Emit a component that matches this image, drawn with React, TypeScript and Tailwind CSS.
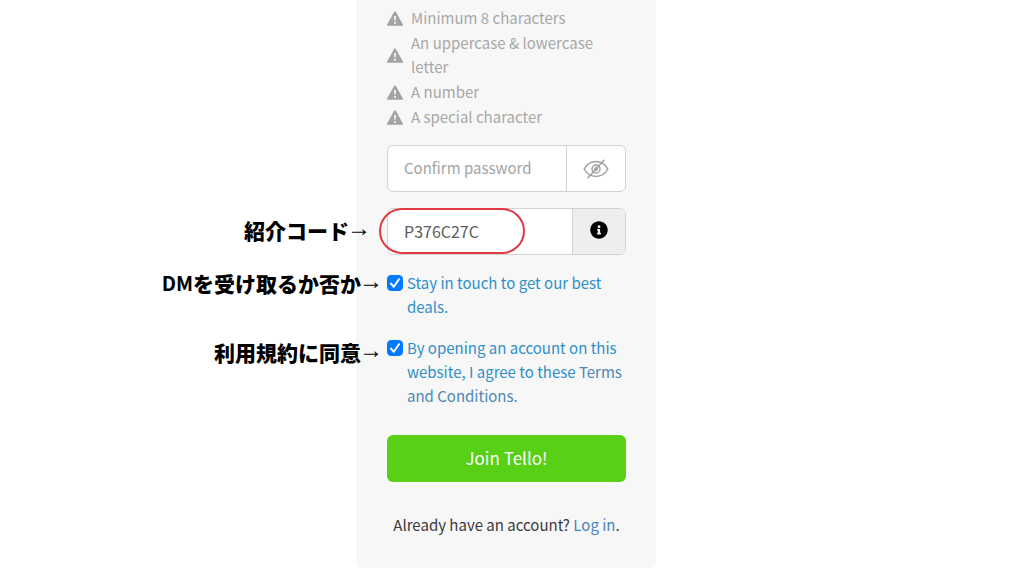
import type { ReactNode } from 'react';
import { FaInfoCircle } from 'react-icons/fa';

const rules = [
  'Minimum 8 characters',
  'An uppercase & lowercase letter',
  'A number',
  'A special character',
];

function WarningIcon() {
  return (
    <svg viewBox="0 0 32 30" className="h-[15px] w-4 shrink-0" aria-hidden="true">
      <path
        d="M14.4 1.400a1.800 1.800 0 0 1 3.200 0l14.200 25.800a1.500 1.500 0 0 1-1.300 2.200H1.500a1.500 1.500 0 0 1-1.300-2.200z"
        fill="#a3a3a3"
      />
      <path d="M14 10h4l-.8 9.600h-2.400zM14.200 22h3.600v3.600h-3.600z" fill="#f7f7f7" />
    </svg>
  );
}

function EyeOffIcon() {
  return (
    <svg
      viewBox="0 0 26 20"
      className="h-5 w-[26px]"
      fill="none"
      stroke="#a0a0a0"
      strokeWidth="1.500"
      strokeLinecap="round"
      aria-hidden="true"
    >
      <path d="M1.200 10C4 5 8.200 2.600 13 2.600S22 5 24.800 10C22 15 17.800 17.400 13 17.400S4 15 1.200 10z" />
      <circle cx="13" cy="10" r="4" />
      <circle cx="13" cy="10" r="1.300" />
      <path d="M5 18.800 21 1.200" />
    </svg>
  );
}

// Callout that hangs off the left side of the row it describes
function Note({ children, className }: { children: ReactNode; className: string }) {
  return (
    <span
      className={`absolute flex items-center whitespace-nowrap text-[21px] leading-6 font-black text-black ${className}`}
    >
      {children}
      <span className="-ml-0.5 pb-1 font-['Liberation_Sans',sans-serif] text-2xl leading-6 font-bold">→</span>
    </span>
  );
}

function CheckRow({ id, note, noteClass, children }: { id: string; note: ReactNode; noteClass: string; children: ReactNode }) {
  return (
    <div className="relative flex items-start gap-1">
      <Note className={noteClass}>{note}</Note>
      <span className="relative mt-1 size-4 shrink-0">
        <input
          id={id}
          type="checkbox"
          defaultChecked
          className="peer block size-4 appearance-none rounded border border-gray-400 bg-white checked:border-[#007aff] checked:bg-[#007aff]"
        />
        <svg
          viewBox="0 0 16 16"
          className="pointer-events-none absolute inset-0 hidden size-4 peer-checked:block"
          fill="none"
          stroke="#fff"
          strokeWidth="2"
          strokeLinecap="round"
          strokeLinejoin="round"
          aria-hidden="true"
        >
          <path d="M4 8.600 6.800 11.800 12 4.200" />
        </svg>
      </span>
      <label htmlFor={id} className="text-[15px] leading-6 text-[#2f8fc6]">
        {children}
      </label>
    </div>
  );
}

export default function App() {
  return (
    <div className="min-h-screen bg-white font-['Noto_Sans_CJK_JP',sans-serif] text-[15px]">
      <main className="mx-auto w-full max-w-[300px] -translate-x-1.5 rounded-b-md bg-[#f7f7f7] pt-1.5 pr-[30px] pb-[31px] pl-[31px]">
        <form onSubmit={(e) => e.preventDefault()}>
          <ul className="flex flex-col gap-px leading-6 text-[#a8a8a8]">
            {rules.map((rule) => (
              <li key={rule} className="flex items-center gap-2">
                <WarningIcon />
                {rule}
              </li>
            ))}
          </ul>

          <div className="mt-4 flex h-[47px] overflow-hidden rounded-md border border-[#d2d2d2] bg-white">
            <input
              type="password"
              aria-label="Confirm password"
              placeholder="Confirm password"
              className="min-w-0 flex-1 px-4 text-[15px] outline-none placeholder:text-[#a3a3a3]"
            />
            <button
              type="button"
              aria-label="Show password"
              className="flex w-[59px] items-center justify-center border-l border-[#d2d2d2]"
            >
              <EyeOffIcon />
            </button>
          </div>

          <div className="relative mt-4">
            <Note className="top-2 right-full mr-4">紹介コード</Note>
            <div className="flex h-[47px] overflow-hidden rounded-md border border-[#d2d2d2] bg-white">
              <input
                type="text"
                aria-label="Referral code"
                defaultValue="P376C27C"
                className="min-w-0 flex-1 px-4 pb-0.5 text-base text-[#5c5c5c] outline-none"
              />
              <button
                type="button"
                aria-label="About referral codes"
                className="flex w-[53px] items-center justify-center border-l border-[#d2d2d2] bg-[#eeeeee] pb-1 text-black"
              >
                <FaInfoCircle size={18} />
              </button>
            </div>
            <span className="pointer-events-none absolute top-0 -left-2 h-[46px] w-[146px] rounded-full border-2 border-[#dd3b41]" />
          </div>

          <div className="mt-4 flex flex-col gap-[17px]">
            <CheckRow
              id="deals"
              note={
                <>
                  <span className="text-xl leading-6 font-bold">DM</span>を受け取るか否か
                </>
              }
              noteClass="right-full -top-0.5 mr-1"
            >
              Stay in touch to get our best deals.
            </CheckRow>
            <CheckRow id="terms" note="利用規約に同意" noteClass="right-full top-0.5 mr-1">
              By opening an account on this website, I agree to these{' '}
              <a href="#terms" className="text-[#4e86b4]">
                Terms and Conditions.
              </a>
            </CheckRow>
          </div>

          <button type="submit" className="mt-[27px] h-[47px] w-full rounded-md bg-[#57d015] pb-0.5 text-[17px] text-white">
            Join Tello!
          </button>
        </form>

        <p className="mt-[31px] text-center leading-6 whitespace-nowrap text-[#3a3a3a]">
          Already have an account?{' '}
          <a href="#login" className="text-[#4585be]">
            Log in
          </a>
          .
        </p>
      </main>
    </div>
  );
}
